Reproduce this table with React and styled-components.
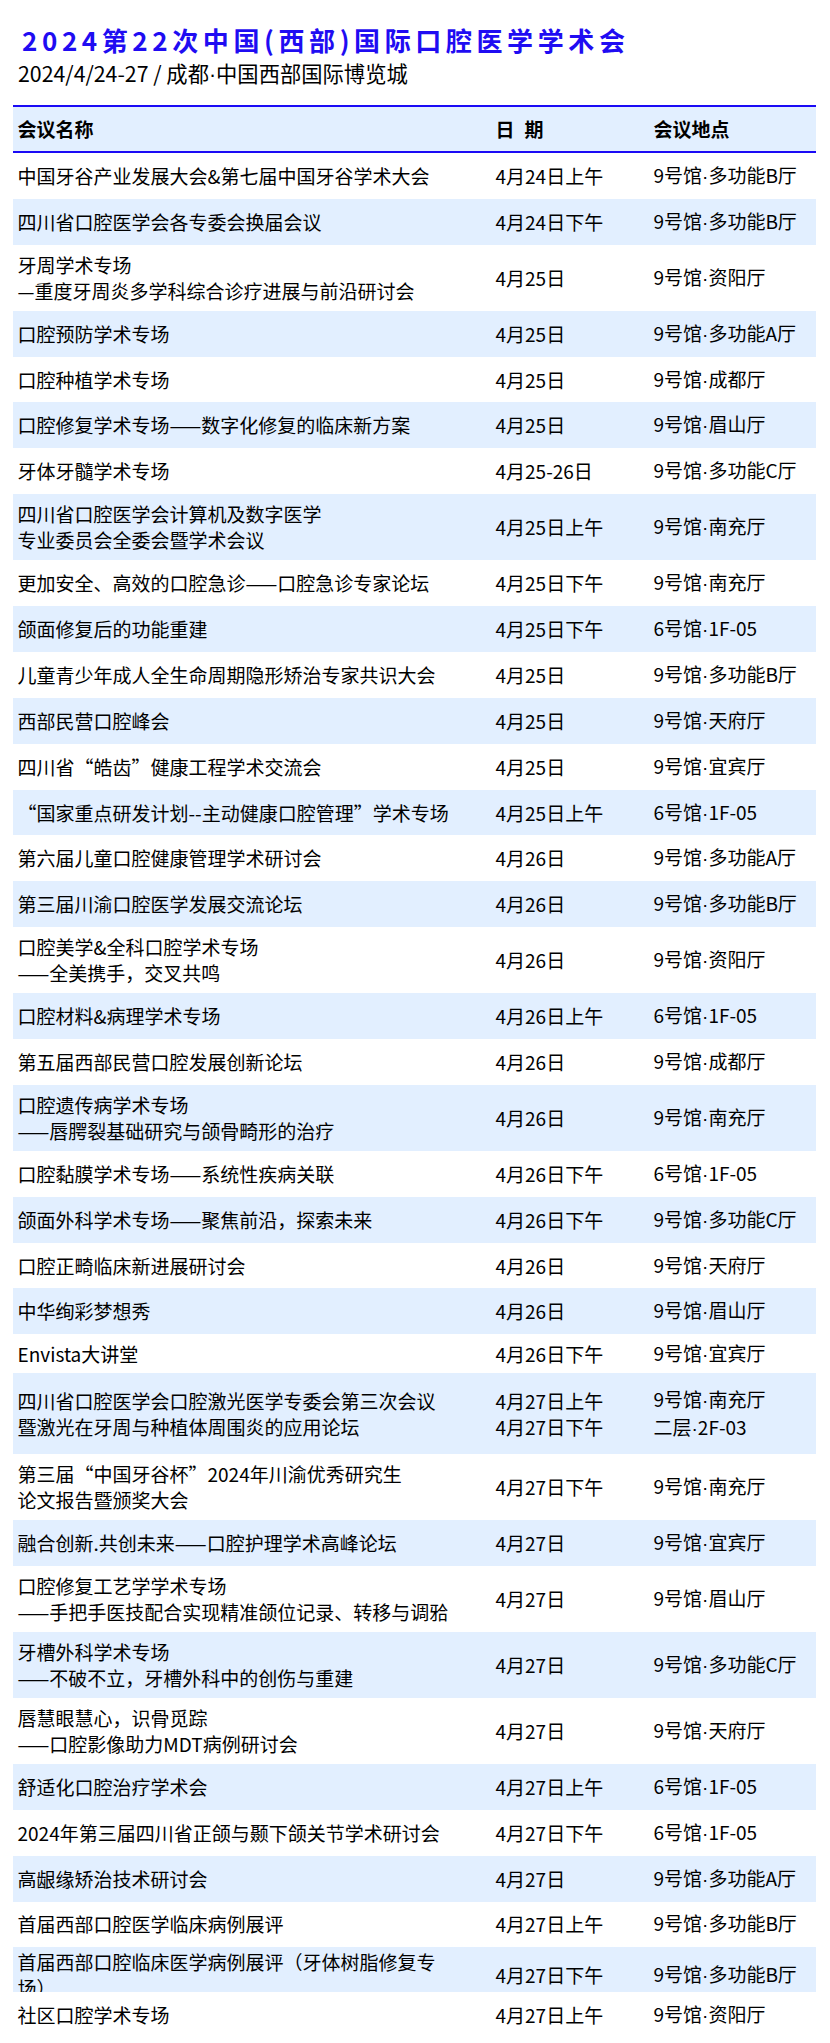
import React from "react";
import styled, { createGlobalStyle } from "styled-components";

const GlobalStyle = createGlobalStyle`
  body {
    margin: 0;
    background: #fff;
    color: #000;
    font-family: "Noto Sans CJK SC", "Noto Sans", sans-serif;
  }
`;

const Page = styled.div`
  padding: 23px 14px 0 13px;
`;

const Title = styled.h1`
  margin: 0 0 0 9px;
  font-size: 26px;
  line-height: 34px;
  font-weight: 700;
  letter-spacing: 4.6px;
  color: #1f0cf2;
`;

const Sub = styled.div`
  margin: 2px 0 0 5px;
  font-size: 21.3px;
  line-height: 28px;
`;

const Table = styled.div`
  margin-top: 16px;
`;

const Row = styled.div`
  display: grid;
  grid-template-columns: 478px 158px 1fr;
  box-sizing: border-box;
  height: ${(p) => p.$h}px;
  overflow: hidden;
  background: ${(p) => (p.$shade ? "#e2efff" : "#fff")};
`;

const HeadRow = styled(Row)`
  border-top: 2px solid #1a0af5;
  border-bottom: 2px solid #1a0af5;
  background: #e2efff;
  font-weight: 700;
`;

const Cell = styled.div`
  display: flex;
  align-items: safe center;
  padding: 2px 4.5px;
  padding-right: ${(p) => (p.$wide ? "30px" : "4.5px")};
  font-size: 19px;
  line-height: 26px;
  white-space: pre-line;
  min-width: 0;
`;

const Lines = styled.div`
  white-space: pre-line;
`;

const Dot = styled.span`
  font-family: "Liberation Sans", "Noto Sans", sans-serif;
`;

const Gap = styled.span`
  display: inline-block;
  width: 10px;
`;

// the CJK font draws "·" full width; the reference has a narrow dot
const dotted = (text) =>
  text.split("·").map((part, i) => (
    <React.Fragment key={i}>
      {i > 0 && <Dot>·</Dot>}
      {part}
    </React.Fragment>
  ));

const rows = [
  ["中国牙谷产业发展大会&第七届中国牙谷学术大会", "4月24日上午", "9号馆·多功能B厅"],
  ["四川省口腔医学会各专委会换届会议", "4月24日下午", "9号馆·多功能B厅"],
  ["牙周学术专场\n—重度牙周炎多学科综合诊疗进展与前沿研讨会", "4月25日", "9号馆·资阳厅"],
  ["口腔预防学术专场", "4月25日", "9号馆·多功能A厅"],
  ["口腔种植学术专场", "4月25日", "9号馆·成都厅"],
  ["口腔修复学术专场——数字化修复的临床新方案", "4月25日", "9号馆·眉山厅"],
  ["牙体牙髓学术专场", "4月25-26日", "9号馆·多功能C厅"],
  ["四川省口腔医学会计算机及数字医学\n专业委员会全委会暨学术会议", "4月25日上午", "9号馆·南充厅"],
  ["更加安全、高效的口腔急诊——口腔急诊专家论坛", "4月25日下午", "9号馆·南充厅"],
  ["颌面修复后的功能重建", "4月25日下午", "6号馆·1F-05"],
  ["儿童青少年成人全生命周期隐形矫治专家共识大会", "4月25日", "9号馆·多功能B厅"],
  ["西部民营口腔峰会", "4月25日", "9号馆·天府厅"],
  ["四川省“皓齿”健康工程学术交流会", "4月25日", "9号馆·宜宾厅"],
  ["“国家重点研发计划--主动健康口腔管理”学术专场", "4月25日上午", "6号馆·1F-05"],
  ["第六届儿童口腔健康管理学术研讨会", "4月26日", "9号馆·多功能A厅"],
  ["第三届川渝口腔医学发展交流论坛", "4月26日", "9号馆·多功能B厅"],
  ["口腔美学&全科口腔学术专场\n——全美携手，交叉共鸣", "4月26日", "9号馆·资阳厅"],
  ["口腔材料&病理学术专场", "4月26日上午", "6号馆·1F-05"],
  ["第五届西部民营口腔发展创新论坛", "4月26日", "9号馆·成都厅"],
  ["口腔遗传病学术专场\n——唇腭裂基础研究与颌骨畸形的治疗", "4月26日", "9号馆·南充厅"],
  ["口腔黏膜学术专场——系统性疾病关联", "4月26日下午", "6号馆·1F-05"],
  ["颌面外科学术专场——聚焦前沿，探索未来", "4月26日下午", "9号馆·多功能C厅"],
  ["口腔正畸临床新进展研讨会", "4月26日", "9号馆·天府厅"],
  ["中华绚彩梦想秀", "4月26日", "9号馆·眉山厅"],
  ["Envista大讲堂", "4月26日下午", "9号馆·宜宾厅", 39],
  [
    "四川省口腔医学会口腔激光医学专委会第三次会议\n暨激光在牙周与种植体周围炎的应用论坛",
    "4月27日上午\n4月27日下午",
    "9号馆·南充厅\n二层·2F-03",
    81,
  ],
  ["第三届“中国牙谷杯”2024年川渝优秀研究生\n论文报告暨颁奖大会", "4月27日下午", "9号馆·南充厅"],
  ["融合创新.共创未来——口腔护理学术高峰论坛", "4月27日", "9号馆·宜宾厅"],
  ["口腔修复工艺学学术专场\n——手把手医技配合实现精准颌位记录、转移与调𬌗", "4月27日", "9号馆·眉山厅"],
  ["牙槽外科学术专场\n——不破不立，牙槽外科中的创伤与重建", "4月27日", "9号馆·多功能C厅"],
  ["唇慧眼慧心，识骨觅踪\n——口腔影像助力MDT病例研讨会", "4月27日", "9号馆·天府厅"],
  ["舒适化口腔治疗学术会", "4月27日上午", "6号馆·1F-05"],
  ["2024年第三届四川省正颌与颞下颌关节学术研讨会", "4月27日下午", "6号馆·1F-05"],
  ["高龈缘矫治技术研讨会", "4月27日", "9号馆·多功能A厅"],
  ["首届西部口腔医学临床病例展评", "4月27日上午", "9号馆·多功能B厅"],
  ["首届西部口腔临床医学病例展评（牙体树脂修复专场）", "4月27日下午", "9号馆·多功能B厅", 45],
  ["社区口腔学术专场", "4月27日上午", "9号馆·资阳厅"],
];

export default function App() {
  return (
    <Page>
      <GlobalStyle />
      <Title>2024第22次中国(西部)国际口腔医学学术会</Title>
      <Sub>{dotted("2024/4/24-27 / 成都·中国西部国际博览城")}</Sub>
      <Table>
        <HeadRow $h={48}>
          <Cell $wide>会议名称</Cell>
          <Cell>
            日<Gap />期
          </Cell>
          <Cell>会议地点</Cell>
        </HeadRow>
        {rows.map(([name, date, place, h], i) => (
          <Row key={i} $shade={i % 2 === 1} $h={h || (name.includes("\n") ? 65.9 : 45.9)}>
            <Cell $wide>{name}</Cell>
            <Cell>{date}</Cell>
            <Cell>
              <Lines>{dotted(place)}</Lines>
            </Cell>
          </Row>
        ))}
      </Table>
    </Page>
  );
}
